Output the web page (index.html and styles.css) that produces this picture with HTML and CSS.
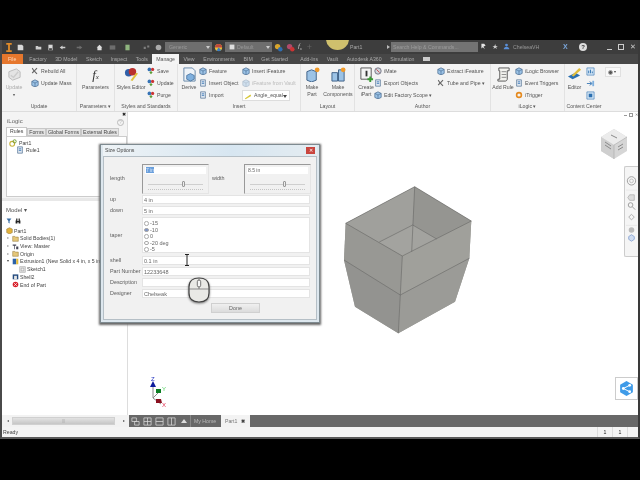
FILE: index.html
```html
<!DOCTYPE html>
<html lang="en">
<head>
<meta charset="utf-8">
<title>Inventor iLogic Size Options</title>
<link rel="stylesheet" href="styles.css">
</head>
<body>
<svg class="defs" width="0" height="0">
  <symbol id="box" viewBox="0 0 10 10"><path d="M1 3l4-2 4 2v5l-4 2-4-2z" fill="#9cc3e6" stroke="#3c5f86" stroke-width=".8"/><path d="M1 3l4 2 4-2M5 5v5" fill="none" stroke="#3c5f86" stroke-width=".7"/></symbol>
  <symbol id="style" viewBox="0 0 10 10"><circle cx="3" cy="3" r="2.3" fill="#3673b5"/><circle cx="7" cy="3" r="2" fill="#c33"/><path d="M3 7l2-2 2 2-2 2z" fill="#5a9c35"/></symbol>
  <symbol id="gear" viewBox="0 0 10 10"><path d="M2 1l2 3 3-3 1 1-3 3 3 3-1 1-3-3-2 2-1-1 2-2-2-3z" fill="#666"/></symbol>
  <symbol id="doc" viewBox="0 0 10 10"><path d="M2 1h6v8H2z" fill="#dde6f0" stroke="#47688c" stroke-width=".8"/><path d="M3.500 3.500h3M3.500 5.500h3" stroke="#3673b5"/></symbol>
  <symbol id="folder" viewBox="0 0 10 10"><path d="M1 2h3l1 1h4v6H1z" fill="#e5c77a" stroke="#8b6f2e" stroke-width=".7"/></symbol>
</svg>

<div class="app">
  <header class="title">
    <span class="blob"></span>
    <svg class="t-logo" viewBox="0 0 8 12"><path d="M1 1h6v2H5v6h2v2H1V9h2V3H1z" fill="#e08b2a"/></svg>
    <svg class="t-ic t1" viewBox="0 0 10 10"><path d="M1 1h6l2 2v6H1z" fill="#d8d8d8"/></svg>
    <svg class="t-ic t2" viewBox="0 0 10 10"><path d="M1 3h3l1 1h4v4H1z" fill="#cfcfcf"/></svg>
    <svg class="t-ic t3" viewBox="0 0 10 10"><path d="M2 1h6v8H2z" fill="#d8d8d8"/><path d="M3 6h4v3H3z" fill="#444"/></svg>
    <svg class="t-ic t3" viewBox="0 0 10 10"><path d="M1 5l4-3v2h4v2H5v2z" fill="#cfcfcf"/></svg>
    <svg class="t-ic t4 t-dim" viewBox="0 0 10 10"><path d="M9 5L5 2v2H1v2h4v2z" fill="#8d8d8d"/></svg>
    <svg class="t-ic t5" viewBox="0 0 10 10"><path d="M5 1l4 4H8v4H2V5H1z" fill="#ddd"/></svg>
    <svg class="t-ic t6 t-dim" viewBox="0 0 10 10"><path d="M1 2h8v6H1z" fill="#8e8e8e"/></svg>
    <svg class="t-ic t7" viewBox="0 0 10 10"><path d="M2 1h6v8H2z" fill="#8fb57f"/></svg>
    <svg class="t-ic t8 t-dim" viewBox="0 0 10 10"><path d="M1 4h3v3H1zM6 2h3v3H6z" fill="#aaa"/></svg>
    <svg class="t-ic t3" viewBox="0 0 10 10"><circle cx="5" cy="5" r="4" fill="#aaa"/></svg>
    <span class="combo">Generic<i class="caret"></i></span>
    <svg class="t-ball" viewBox="0 0 10 10"><circle cx="5" cy="5" r="4" fill="#e8c23d"/><path d="M1 5a4 4 0 0 1 8 0z" fill="#c0483c"/><path d="M3 8.400a4 4 0 0 0 5-.6L5 5z" fill="#3c7cc0"/></svg>
    <span class="combo combo-2"><svg class="c-ic" viewBox="0 0 10 10"><path d="M1 1h8v8H1z" fill="#ddd"/></svg>Default<i class="caret"></i></span>
    <svg class="t-ball" viewBox="0 0 10 10"><circle cx="4" cy="4" r="3" fill="#d8a52c"/><circle cx="7" cy="7" r="2.500" fill="#2f6db0"/></svg>
    <svg class="t-ball t-ball2" viewBox="0 0 10 10"><circle cx="4" cy="4" r="3" fill="#b04a6a"/><circle cx="7" cy="7" r="2.500" fill="#c33"/></svg>
    <span class="t-fx">f<sub>x</sub></span>
    <span class="t-plus">+</span>
    <span class="t-doc">Part1</span>
    <span class="t-arrow"></span>
    <span class="search">Search Help &amp; Commands...</span>
    <svg class="t-ic t-s1" viewBox="0 0 10 10"><path d="M2 1h4l2 3-3 1 2 4-3-3-2 2z" fill="#e6e6e6"/></svg>
    <span class="t-star">★</span>
    <svg class="t-ic t-user" viewBox="0 0 10 10"><circle cx="5" cy="3" r="2" fill="#5a8fd8"/><path d="M1 9c0-5 8-5 8 0z" fill="#5a8fd8"/></svg>
    <span class="t-name">ChelseaVH</span>
    <span class="t-x">X</span>
    <span class="t-help">?</span>
    <span class="win"><i class="w-min"></i><i class="w-max"></i><span class="w-x">✕</span></span>
  </header>

  <nav class="tabs">
    <span class="tab file">File</span><span class="tab">Factory</span><span class="tab">3D Model</span><span class="tab">Sketch</span><span class="tab">Inspect</span><span class="tab">Tools</span><span class="tab on">Manage</span><span class="tab">View</span><span class="tab">Environments</span><span class="tab">BIM</span><span class="tab tab-gs">Get Started</span><span class="tab">Add-Ins</span><span class="tab">Vault</span><span class="tab">Autodesk A360</span><span class="tab">Simulation</span><span class="tab"><i class="cam"></i></span>
  </nav>

  <section class="ribbon">
    <div class="grp g-update">
      <div class="g-in">
        <div class="big dim"><svg class="b-ic" viewBox="0 0 16 16"><path d="M2 5l8-3 4 3v6l-8 3-4-3z" fill="#e4e4e4" stroke="#bbb"/><path d="M4 9l3 2 5-6" fill="none" stroke="#ccc" stroke-width="1.500"/></svg><span>Update</span><b>▾</b></div>
        <div class="col c-up">
          <span class="it"><svg class="ic"><use href="#gear"/></svg>Rebuild All</span>
          <span class="it"><svg class="ic"><use href="#box"/></svg>Update Mass</span>
        </div>
      </div>
      <p class="gl">Update</p>
    </div>
    <div class="grp g-param">
      <div class="g-in center"><div class="big"><span class="fx">f<sub>x</sub></span><span>Parameters</span></div></div>
      <p class="gl">Parameters ▾</p>
    </div>
    <div class="grp g-style">
      <div class="g-in">
        <div class="big w-style"><svg class="b-ic" viewBox="0 0 16 16"><circle cx="5" cy="6" r="4" fill="#2f5fa8"/><circle cx="9" cy="5" r="4" fill="#b9312e"/><path d="M7 14l6-8 2 1-6 8z" fill="#e0c23c"/></svg><span>Styles Editor</span></div>
        <div class="col">
          <span class="it"><svg class="ic"><use href="#style"/></svg>Save</span>
          <span class="it"><svg class="ic"><use href="#style"/></svg>Update</span>
          <span class="it"><svg class="ic"><use href="#style"/></svg>Purge</span>
        </div>
      </div>
      <p class="gl">Styles and Standards</p>
    </div>
    <div class="grp g-insert">
      <div class="g-in">
        <div class="big w-derive"><svg class="b-ic" viewBox="0 0 16 16"><path d="M2 1h9l3 3v11H2z" fill="#eef3f8" stroke="#6486a8"/><path d="M5 9l4-2 4 2v4l-4 2-4-2z" fill="#7fb0de" stroke="#2f5f90" stroke-width=".7"/></svg><span>Derive</span></div>
        <div class="col c-ins">
          <span class="it"><svg class="ic"><use href="#box"/></svg>Feature</span>
          <span class="it"><svg class="ic"><use href="#doc"/></svg>Insert Object</span>
          <span class="it"><svg class="ic"><use href="#doc"/></svg>Import</span>
        </div>
        <div class="col">
          <span class="it"><svg class="ic"><use href="#box"/></svg>Insert iFeature</span>
          <span class="it off"><svg class="ic"><use href="#box"/></svg>iFeature from Vault</span>
          <span class="select"><svg class="ic" viewBox="0 0 10 10"><path d="M1 8l7-5 1 2-7 4z" fill="#d8c83a"/></svg>Angle_equal<i class="caret dark"></i></span>
        </div>
      </div>
      <p class="gl">Insert</p>
    </div>
    <div class="grp g-layout">
      <div class="g-in">
        <div class="big w-part"><svg class="b-ic" viewBox="0 0 16 16"><path d="M2 5l5-2 5 2v9l-5 2-5-2z" fill="#9cc3e6" stroke="#3c5f86"/><circle cx="13" cy="3" r="2.500" fill="#f09a2a"/></svg><span>Make<br>Part</span></div>
        <div class="big w-comp"><svg class="b-ic" viewBox="0 0 16 16"><path d="M1 6h6v9H1zM8 3h6v12H8z" fill="#9cc3e6" stroke="#3c5f86"/><circle cx="13" cy="3" r="2.500" fill="#f09a2a"/></svg><span>Make<br>Components</span></div>
      </div>
      <p class="gl">Layout</p>
    </div>
    <div class="grp g-author">
      <div class="g-in">
        <div class="big w-ipart"><svg class="b-ic" viewBox="0 0 16 16"><path d="M2 1h11v12H2z" fill="#f4f4f4" stroke="#555"/><path d="M7 4h2v6H7z" fill="#333"/><path d="M11 10h2v2h2v2h-2v2h-2v-2H9v-2h2z" fill="#3a9a33"/></svg><span>Create<br>iPart</span></div>
        <div class="col c-mate">
          <span class="it"><svg class="ic" viewBox="0 0 10 10"><circle cx="5" cy="5" r="4" fill="#cfd4da" stroke="#667"/><path d="M3 3l4 4" stroke="#c33"/></svg>iMate</span>
          <span class="it"><svg class="ic"><use href="#doc"/></svg>Export Objects</span>
          <span class="it"><svg class="ic"><use href="#box"/></svg>Edit Factory Scope ▾</span>
        </div>
        <div class="col">
          <span class="it"><svg class="ic"><use href="#box"/></svg>Extract iFeature</span>
          <span class="it"><svg class="ic"><use href="#gear"/></svg>Tube and Pipe ▾</span>
        </div>
      </div>
      <p class="gl">Author</p>
    </div>
    <div class="grp g-ilogic">
      <div class="g-in">
        <div class="big w-rule"><svg class="b-ic" viewBox="0 0 16 16"><path d="M3 1h11v3h-2v9c0 1-1 2-2 2H2v-2h2V4H3z" fill="#f2f2ee" stroke="#555"/><path d="M6 5h5M6 8h5M6 11h5" stroke="#888"/></svg><span>Add Rule</span></div>
        <div class="col">
          <span class="it"><svg class="ic"><use href="#box"/></svg>iLogic Browser</span>
          <span class="it"><svg class="ic"><use href="#doc"/></svg>Event Triggers</span>
          <span class="it"><svg class="ic" viewBox="0 0 10 10"><circle cx="5" cy="5" r="3" fill="none" stroke="#e58a1f" stroke-width="2"/></svg>iTrigger</span>
        </div>
      </div>
      <p class="gl">iLogic ▾</p>
    </div>
    <div class="grp g-content">
      <div class="g-in">
        <div class="big w-edit"><svg class="b-ic" viewBox="0 0 16 16"><path d="M1 10l8-4 5 3-8 4z" fill="#2b6fb0"/><path d="M5 9l8-8 2 2-8 7z" fill="#e0bc3a"/></svg><span>Editor</span></div>
        <div class="col-ic">
          <svg class="ci" viewBox="0 0 10 10"><path d="M1 1h8v8H1z" fill="#d5e6f5" stroke="#3a78b5" stroke-width=".7"/><path d="M3 7V4M5 7V3M7 7V5" stroke="#2b6fb0"/></svg>
          <svg class="ci" viewBox="0 0 10 10"><path d="M1 5h5M4 3l3 2-3 2" fill="none" stroke="#3a78b5"/><path d="M7 2h2v6H7z" fill="#7fb0de"/></svg>
          <svg class="ci" viewBox="0 0 10 10"><path d="M1 1h8v8H1z" fill="#d5e6f5" stroke="#3a78b5" stroke-width=".7"/><path d="M3 3h4v4H3z" fill="#2b6fb0"/></svg>
        </div>
      </div>
      <p class="gl">Content Center</p>
    </div>
    <div class="more"><i class="more-dot"></i><b>▾</b></div>
  </section>

  <main class="work">
    <aside class="side">
      <div class="ilogic">
        <span class="close">✖</span>
        <div class="il-head"><span>iLogic</span><span class="q">?</span></div>
        <div class="il-tabs"><span class="il-tab on">Rules</span><span class="il-tab">Forms</span><span class="il-tab">Global Forms</span><span class="il-tab">External Rules</span></div>
        <div class="il-pane">
          <div class="node"><svg class="ic" viewBox="0 0 10 10"><circle cx="4" cy="6" r="3" fill="none" stroke="#c7b23a" stroke-width="1.400"/><circle cx="7" cy="3" r="2" fill="none" stroke="#6f9e3a" stroke-width="1.200"/></svg>Part1</div>
          <div class="node n2"><svg class="ic"><use href="#doc"/></svg>Rule1</div>
        </div>
      </div>
      <div class="split"></div>
      <div class="model">
        <div class="m-head">Model ▾</div>
        <div class="m-tools">
          <svg class="mt" viewBox="0 0 10 10"><path d="M1 1h8L6 5v4L4 8V5z" fill="#3a6ea5"/></svg>
          <svg class="mt" viewBox="0 0 10 10"><path d="M1 4h3v5H1zM6 4h3v5H6zM2 1h2v3H2zM6 1h2v3H6zM4 5h2v2H4z" fill="#222"/></svg>
        </div>
        <div class="tree">
          <div class="row"><svg class="ic" viewBox="0 0 10 10"><path d="M1 3l4-2 4 2v5l-4 2-4-2z" fill="#e3b23c" stroke="#8b6f2e" stroke-width=".7"/></svg>Part1</div>
          <div class="row lv"><i class="tw">▹</i><svg class="ic"><use href="#folder"/></svg>Solid Bodies(1)</div>
          <div class="row lv"><i class="tw">▹</i><svg class="ic" viewBox="0 0 10 10"><path d="M1 2h5v2H4v5H3V4H1zM6 5h3v4H6z" fill="#445"/></svg>View: Master</div>
          <div class="row lv"><i class="tw">▹</i><svg class="ic"><use href="#folder"/></svg>Origin</div>
          <div class="row lv"><i class="tw">▾</i><svg class="ic" viewBox="0 0 10 10"><path d="M1 1h5v8H1z" fill="#2c62a8"/><path d="M6 1h3v8H6z" fill="#e2b93a"/></svg>Extrusion1 (New Solid x 4 in, x 5 in)</div>
          <div class="row lv2"><svg class="ic" viewBox="0 0 10 10"><path d="M1 1h8v8H1z" fill="#eee" stroke="#888" stroke-width=".7"/><path d="M3 3h4v4H3z" fill="none" stroke="#888" stroke-width=".7"/></svg>Sketch1</div>
          <div class="row lv"><i class="tw"></i><svg class="ic" viewBox="0 0 10 10"><path d="M1 2h8v7H1z" fill="#234a7e"/><path d="M3 4h4v5H3z" fill="#e6e6e6"/></svg>Shell2</div>
          <div class="row lv"><i class="tw"></i><svg class="ic" viewBox="0 0 10 10"><circle cx="5" cy="5" r="4" fill="#d8202a"/><path d="M3 3l4 4M7 3l-4 4" stroke="#fff"/></svg>End of Part</div>
        </div>
      </div>
    </aside>

    <div class="canvas">
      <div class="mdi"><i class="m-min"></i><i class="m-max"></i><span>✕</span></div>
      <svg class="cube" viewBox="0 0 28 32">
        <path d="M14 1l13 8v14l-13 8L1 23V9z" fill="#d6d6d6"/>
        <path d="M14 1l13 8-13 8L1 9z" fill="#ececec"/>
        <path d="M1 9l13 8v14L1 23z" fill="#cfcfcf"/>
        <path d="M14 17v14M14 17L27 9" stroke="#aaa" stroke-width=".6" fill="none"/>
        <path d="M5 14l6 4M5 17l6 4M18 22l5-3M18 19l5-3M11 7l6 3" stroke="#8a8a8a" stroke-width="1"/>
      </svg>
      <div class="nav">
        <svg viewBox="0 0 14 90">
          <circle cx="7" cy="12" r="4.500" fill="none" stroke="#999"/><circle cx="7" cy="12" r="2" fill="none" stroke="#bbb"/>
          <path d="M3 30l2-3h5v6H5z" fill="#ddd" stroke="#999" stroke-width=".6"/>
          <circle cx="6" cy="38" r="2.500" fill="none" stroke="#999"/><path d="M8 40l3 3" stroke="#999"/>
          <path d="M7 48l3 3-3 3-3-3z" fill="none" stroke="#aaa"/>
          <circle cx="7" cy="65" r="3" fill="#bbb"/>
          <path d="M4 72l3-2 3 2v3l-3 2-3-2z" fill="#cfdcf0" stroke="#6d8ec9" stroke-width=".7"/>
          <path d="M1 22h12M1 60h12" stroke="#ddd" stroke-width=".5"/>
        </svg>
      </div>
      <svg class="part" viewBox="343 186 130 150">
        <path d="M345.700 223.300L414.700 186.700 471.300 221 469.300 258.300 455 301.700 398.300 333.300 355 306.700 344 260z" fill="#9a9a96"/>
        <path d="M345.700 223.300L414.700 186.700 411.700 251.700 402.300 256z" fill="#a0a09c"/>
        <path d="M414.700 186.700L471.300 221 436.700 239 412.700 225z" fill="#959591"/>
        <path d="M379.300 242l33.400-17 24 14-25 12.700-8.400 4.300z" fill="#a3a39f"/>
        <path d="M345.700 223.300L402.300 256 400.300 295 344 260z" fill="#989894"/>
        <path d="M402.300 256L471.300 221 469.300 258.300 400.300 295z" fill="#a0a09b"/>
        <path d="M344 260L400.300 295 398.300 333.300 355 306.700z" fill="#939390"/>
        <path d="M400.300 295L469.300 258.300 455 301.700 398.300 333.300z" fill="#9b9b97"/>
        <g fill="none" stroke="#686866" stroke-width=".6">
          <path d="M345.700 223.300L414.700 186.700 471.300 221 402.300 256z"/>
          <path d="M414.700 186.700L411.700 251.700M379.300 242l33.400-17 24 14"/>
          <path d="M402.300 256L400.300 295 398.300 333.300M344 260L400.300 295 469.300 258.300"/>
        </g>
      </svg>
      <svg class="triad" viewBox="0 0 20 32">
        <path d="M5 7v15l8 6M5 22l6-6" stroke="#8a8a8a" fill="none"/>
        <path d="M5 5l3 6H2z" fill="#0d1a9c"/><path d="M8 13h5v4H8z" fill="#0c7d22"/><path d="M8 23l5 0 1 4H8z" fill="#8a1020"/>
        <text x="3" y="4.500" class="tz">Z</text><text x="14" y="15" class="ty">Y</text><text x="14" y="31" class="tx">X</text>
      </svg>
      <div class="share"><svg viewBox="0 0 16 16"><path d="M8 1l6 3.500v7L8 15l-6-3.500v-7z" fill="#3f9be8"/><path d="M5 8l6-3M5 8l6 3" stroke="#fff" stroke-width=".9"/><circle cx="5" cy="8" r="1.300" fill="#fff"/><circle cx="11" cy="5" r="1.300" fill="#fff"/><circle cx="11" cy="11" r="1.300" fill="#fff"/></svg></div>
    </div>

    <section class="dialog">
      <div class="d-title"><span>Size Options</span><i class="d-x">✕</i></div>
      <div class="d-body">
        <div class="d-top">
          <span class="d-l">length</span>
          <div class="sbox s1"><span class="inp"><mark>7 in</mark></span><div class="track"><i class="thumb"></i></div></div>
          <span class="d-w">width</span>
          <div class="sbox s2"><span class="inp">8.5 in</span><div class="track"><i class="thumb"></i></div></div>
        </div>
        <div class="d-row r-up"><span class="d-l">up</span><span class="inp">4 in</span></div>
        <div class="d-row"><span class="d-l">down</span><span class="inp">5 in</span></div>
        <div class="d-row r-taper"><span class="d-l">taper</span>
          <div class="radios">
            <label><i class="rd"></i>-15</label><label><i class="rd sel"></i>-10</label><label><i class="rd"></i>0</label><label><i class="rd"></i>-20 deg</label><label><i class="rd"></i>-5</label>
          </div>
        </div>
        <div class="d-row"><span class="d-l">shell</span><span class="inp">0.1 in</span></div>
        <div class="d-row"><span class="d-l">Part Number</span><span class="inp">12233648</span></div>
        <div class="d-row"><span class="d-l">Description</span><span class="inp"></span></div>
        <div class="d-row"><span class="d-l">Designer</span><span class="inp">Chelseak</span></div>
        <div class="d-foot"><span class="done">Done</span></div>
      </div>
      <svg class="ibeam" viewBox="0 0 6 12"><path d="M1 .5h4M3 .5v11M1 11.500h4" stroke="#222" fill="none"/></svg>
      <svg class="mouse" viewBox="0 0 22 26"><path d="M11 1c6 0 10 3 10 9v6c0 6-4 9-10 9S1 22 1 16v-6C1 4 5 1 11 1z" fill="#e9e9e6" stroke="#444" stroke-width="1.200"/><path d="M1 12h20M11 1v11" stroke="#666" stroke-width=".7"/><rect x="9.300" y="3" width="3.400" height="7" rx="1.700" fill="#f6f6f6" stroke="#555" stroke-width=".8"/></svg>
    </section>
  </main>

  <div class="docbar">
    <div class="hscroll"><i class="ha">◂</i><span class="thumbbar">|||</span><i class="ha">▸</i></div>
    <div class="doctabs">
      <svg class="dt" viewBox="0 0 10 10"><path d="M1 1h5v4H1zM4 5h5v4H4z" fill="none" stroke="#ddd" stroke-width=".8"/></svg>
      <svg class="dt" viewBox="0 0 10 10"><path d="M1 1h8v8H1zM5 1v8M1 5h8" fill="none" stroke="#ddd" stroke-width=".8"/></svg>
      <svg class="dt" viewBox="0 0 10 10"><path d="M1 1h8v8H1zM1 5h8" fill="none" stroke="#ddd" stroke-width=".8"/></svg>
      <svg class="dt" viewBox="0 0 10 10"><path d="M1 1h8v8H1zM5 1v8" fill="none" stroke="#ddd" stroke-width=".8"/></svg>
      <span class="up"></span>
      <span class="home">My Home</span>
      <span class="active">Part1 <b>✖</b></span>
    </div>
  </div>
  <footer class="status"><span class="ready">Ready</span><span class="cell c1">1</span><span class="cell">1</span><span class="grip"></span></footer>
</div>
</body>
</html>
```
FILE: styles.css
```css
* { box-sizing: border-box; }
html, body { margin: 0; height: 100%; background: #000; overflow: hidden; }
body { font: 5.2px/1.2 "Liberation Sans", Arial, sans-serif; color: #444; }
.defs { position: absolute; }
i { font-style: normal; }
p { margin: 0; }

.app { margin-top: 40px; width: 640px; height: 399px; background: #fff; border-left: 2px solid #4a4a4a; border-right: 2px solid #3a3a3a; border-bottom: 2px solid #5a5a5a; display: flex; flex-direction: column; position: relative; overflow: hidden; filter: blur(.3px); }

/* title bar */
.title { height: 14px; flex: none; background: #3d3d3d; display: flex; align-items: center; color: #bbb; position: relative; overflow: hidden; }
.blob { position: absolute; left: 324px; top: -12px; width: 23px; height: 22px; border-radius: 50%; background: #cfc06d; }
.t-logo { width: 8px; height: 11px; margin-left: 3px; flex: none; }
.t-ic { width: 7px; height: 7px; flex: none; }
.t1 { margin-left: 3.500px; }
.t2 { margin-left: 11px; }
.t3 { margin-left: 5px; }
.t4 { margin-left: 10px; }
.t5 { margin-left: 13px; }
.t6 { margin-left: 6px; }
.t7 { margin-left: 8px; }
.t8 { margin-left: 12px; }
.t-dim { opacity: .6; }
.combo { width: 47px; height: 10px; margin-left: 3.500px; background: #6e6e6e; color: #999; padding-left: 4px; display: flex; align-items: center; position: relative; flex: none; }
.combo-2 { margin-left: 2px; }
.c-ic { width: 6px; height: 6px; margin-right: 2px; }
.caret { position: absolute; right: 2px; top: 4px; border: 2px solid transparent; border-top: 3px solid #ccc; border-bottom: 0; }
.caret.dark { border-top-color: #444; }
.t-ball { width: 9px; height: 9px; margin-left: 2px; flex: none; }
.t-ball2 { margin-left: 3px; }
.t-fx { margin-left: 3px; font: italic 7px "Liberation Serif", serif; color: #ccc; }
.t-fx sub { font-size: 4px; }
.t-plus { margin-left: 5px; color: #666; font-size: 9px; }
.t-doc { position: absolute; left: 348px; top: 4px; color: #a8a8a8; }
.t-arrow { position: absolute; left: 385px; top: 5px; border: 2px solid transparent; border-left: 3px solid #bbb; border-right: 0; }
.search { position: absolute; left: 389px; top: 2px; width: 87px; height: 10px; background: #737373; color: #9d9d9d; padding: 2px 2px; }
.t-s1 { position: absolute; left: 478px; top: 3px; margin: 0; }
.t-star { position: absolute; left: 490px; top: 3px; color: #ccc; font-size: 7px; }
.t-user { position: absolute; left: 501px; top: 3px; margin: 0; }
.t-name { position: absolute; left: 511px; top: 4px; color: #999; }
.t-x { position: absolute; left: 561px; top: 3px; color: #7aa6da; font-weight: bold; font-size: 7px; }
.t-help { position: absolute; left: 577px; top: 3px; width: 8px; height: 8px; border-radius: 50%; background: #ddd; color: #333; font: bold 6px/8px "Liberation Sans", sans-serif; text-align: center; }
.win { position: absolute; left: 605px; top: 2px; display: flex; align-items: center; gap: 6px; height: 10px; }
.w-min { width: 5px; height: 1px; background: #ccc; margin-top: 4px; }
.w-max { width: 6px; height: 6px; border: 1px solid #ccc; }
.w-x { color: #ccc; font-size: 7px; }

/* tabs */
.tabs { height: 10px; flex: none; background: #474747; display: flex; color: #aaa; }
.tab { padding: 0 4.300px; line-height: 10px; white-space: nowrap; }
.tab.file { background: #e6772d; color: #ffd9bd; width: 21px; margin-right: 2px; padding-left: 6px; }
.tab.on { background: #f4f4f4; color: #555; width: 27px; padding-left: 4px; }
.tab-gs { padding-right: 8px; }
.cam { display: inline-block; width: 7px; height: 4px; background: #ccc; }

/* ribbon */
.ribbon { height: 48px; flex: none; background: #f3f3f3; display: flex; border-bottom: 1px solid #ddd; }
.grp { flex: none; display: flex; flex-direction: column; border-right: 1px solid #e2e2e2; }
.g-in { height: 40px; display: flex; padding-top: 3px; }
.center { justify-content: center; }
.gl { height: 8px; text-align: center; color: #555; line-height: 7px; }
.g-update { width: 75px; } .g-param { width: 38px; } .g-style { width: 63px; } .g-insert { width: 123px; }
.g-layout { width: 54px; } .g-author { width: 136px; } .g-ilogic { width: 74px; } .g-content { width: 38px; border-right: 0; }
.big { display: flex; flex-direction: column; align-items: center; text-align: center; color: #555; flex: none; line-height: 7px; }
.big.dim { color: #aaa; width: 24px; }
.big b { font-size: 4px; color: #666; }
.b-ic { width: 15px; height: 15px; margin-bottom: 1.500px; flex: none; }
.fx { height: 17px; font: italic 13px/15px "Liberation Serif", serif; color: #333; }
.fx sub { font-size: 7px; line-height: 0; vertical-align: baseline; }
.col { display: flex; flex-direction: column; gap: 4px; }
.c-up { margin-left: 5px; }
.it { display: flex; align-items: center; height: 8px; white-space: nowrap; color: #555; }
.it.off { color: #bbb; }
.it.off .ic { opacity: .4; }
.ic { width: 8px; height: 8px; margin-right: 2px; flex: none; }
.w-style { width: 32px; white-space: nowrap; }
.w-derive { width: 20px; margin-left: 1px; }
.c-ins { width: 43px; }
.select { width: 48px; height: 11px; background: #fff; border: 1px solid #ddd; display: flex; align-items: center; position: relative; color: #555; padding-left: 1px; margin-top: -1px; }
.select .caret { top: 4px; }
.w-part { width: 22px; }
.w-comp { width: 32px; margin-left: -1px; }
.w-ipart { width: 20px; margin-left: 1px; }
.c-mate { width: 63px; margin-left: -2px; }
.w-rule { width: 24px; }
.w-edit { width: 19px; }
.col-ic { display: flex; flex-direction: column; gap: 3px; margin-left: 2px; }
.ci { width: 9px; height: 9px; }
.more { margin: 3px 0 0 2px; width: 16px; height: 10px; display: flex; align-items: center; gap: 1px; background: #f8f8f8; border: 1px solid #e0e0e0; padding-left: 2px; font-size: 4px; }
.more-dot { width: 5px; height: 5px; border-radius: 50%; background: #555; border: 1px solid #aaa; }
.more b { font-weight: normal; }

/* workspace */
.work { flex: 1; min-height: 0; display: flex; position: relative; }
.side { width: 126px; flex: none; display: flex; flex-direction: column; background: #f5f5f5; border-right: 1px solid #ddd; }
.ilogic { height: 86px; flex: none; padding: 5px 0 0 4px; position: relative; background: #f4f4f4; }
.close { position: absolute; right: 1px; top: -1px; font-size: 5px; color: #222; }
.il-head { display: flex; justify-content: space-between; align-items: center; height: 10px; padding: 0 1px; font-size: 6px; color: #666; }
.q { width: 7px; height: 7px; margin-right: 2px; border: 1px solid #bbb; border-radius: 50%; color: #bbb; font-size: 5px; line-height: 5px; text-align: center; }
.il-tabs { display: flex; height: 9px; }
.il-tab { padding: 0 1px; border: 1px solid #c8c8c8; background: #e6e6e6; line-height: 7px; margin-top: 1px; white-space: nowrap; color: #444; }
.il-tab.on { background: #fff; margin-top: 0; border-bottom: 0; padding: 0 3px; }
.il-pane { background: #fff; border: 1px solid #ccc; height: 61px; padding: 2px 0 0 2px; }
.node { display: flex; align-items: center; height: 7.500px; }
.n2 { margin-left: 7px; }
.split { height: 3px; background: #e8e8e8; flex: none; }
.model { flex: 1; min-height: 0; background: #fff; padding: 6px 0 0 4px; overflow: hidden; }
.m-head { height: 9px; font-size: 6px; color: #555; }
.m-tools { display: flex; gap: 3px; height: 10px; align-items: center; }
.mt { width: 6px; height: 6px; }
.tree { margin-top: 1px; }
.row { height: 7.700px; display: flex; align-items: center; white-space: nowrap; color: #444; }
.lv { margin-left: 1px; }
.lv2 { margin-left: 13px; }
.tw { width: 5px; font-size: 4px; color: #444; }
.row .ic { width: 7px; height: 7px; margin-right: 1px; }

.canvas { flex: 1; background: #fff; position: relative; }
.mdi { position: absolute; right: 0; top: 0; display: flex; align-items: center; gap: 2px; height: 6px; color: #777; font-size: 4px; }
.m-min { width: 3px; height: 1px; background: #999; }
.m-max { width: 4px; height: 4px; border: 1px solid #999; }
.cube { position: absolute; right: 10px; top: 16px; width: 28px; height: 32px; }
.nav { position: absolute; right: 0; top: 54px; width: 14px; height: 91px; background: #f5f5f5; border: 1px solid #ccc; border-right: 0; border-radius: 2px 0 0 2px; }
.nav svg { display: block; width: 13px; height: 89px; }
.part { position: absolute; left: 215px; top: 74px; width: 130px; height: 150px; }
.triad { position: absolute; left: 20px; top: 264px; width: 20px; height: 32px; }
.tz { font: 6px "Liberation Sans", sans-serif; fill: #2232c0; }
.ty { font: 6px "Liberation Sans", sans-serif; fill: #52d060; }
.tx { font: 6px "Liberation Sans", sans-serif; fill: #e03050; }
.share { position: absolute; right: 0; top: 265px; width: 23px; height: 23px; border: 1px solid #ccc; padding: 2px; background: #fff; }
.share svg { display: block; width: 17px; height: 17px; }

/* dialog */
.dialog { position: absolute; left: 98px; top: 32px; width: 220px; height: 179px; background: #dde7ee; border: 1px solid #7e8a90; box-shadow: 0 1px 2px 1px #666; padding: 0 2px 2px; display: flex; flex-direction: column; color: #555; }
.d-title { height: 11px; flex: none; display: flex; justify-content: space-between; align-items: center; color: #444; background: linear-gradient(90deg, #eef3f6, #d7e6f1 60%, #e4ecf1); padding-left: 2px; }
.d-x { width: 9px; height: 7px; background: #c9453e; color: #fff; font-size: 5px; line-height: 7px; text-align: center; margin-right: 2px; }
.d-body { flex: 1; background: #f1f1f1; padding: 6px 6px 0 6px; border: 1px solid #b5bfc6; font-size: 5.400px; color: #5d5d5d; }
.d-top { display: flex; height: 31px; align-items: center; margin-bottom: 1px; }
.d-l { width: 32px; flex: none; white-space: nowrap; }
.d-w { width: 35px; padding-left: 3px; flex: none; }
.sbox { height: 30px; border: 1px solid #999; border-right-color: #e5e5e5; border-bottom-color: #e5e5e5; padding: 2px; flex: none; width: 67px; }
.sbox .inp { display: block; height: 7px; line-height: 7px; padding: 0 1px; font-size: 5px; }
.inp { background: #fff; flex: 1; padding: 0 1px; font-size: 5.500px; color: #666; line-height: 8px; border: 0; }
mark { background: #6a9fdc; color: #dbe8f7; }
.track { height: 1px; background: #cfcfcf; margin: 10px 3px 0; position: relative; }
.track::after { content: ""; position: absolute; left: 0; right: 0; top: 5px; border-top: 1px dotted #c4c4c4; }
.thumb { position: absolute; left: 34px; top: -3px; width: 3px; height: 6px; background: #eee; border: 1px solid #999; border-radius: 1px; }
.s2 .thumb { left: 33px; }
.d-row { display: flex; align-items: center; height: 9px; margin-bottom: 2px; }
.d-row .inp { height: 9px; border: 1px solid #e4e4e4; }
.r-taper { height: 36px; margin-bottom: 3px; }
.radios { flex: 1; height: 36px; background: #fff; border: 1px solid #e4e4e4; padding: 2px 1px; display: flex; flex-direction: column; font-size: 5.500px; color: #666; }
.radios label { display: flex; align-items: center; height: 6.700px; }
.rd { width: 4.500px; height: 4.500px; border: 1px solid #aaa; border-radius: 50%; margin-right: 1.500px; flex: none; }
.rd.sel { background: #7c93c8; }
.d-foot { padding: 3px 0 0 101px; }
.done { display: block; width: 49px; height: 10px; border: 1px solid #d0d0d0; background: linear-gradient(#f0f0f0, #dcdcdc); text-align: center; line-height: 8px; color: #666; }
.ibeam { position: absolute; left: 83px; top: 109px; width: 6px; height: 12px; }
.mouse { position: absolute; left: 87px; top: 132px; width: 22px; height: 26px; filter: drop-shadow(0 1px 1px #777); }

/* doc bar */
.docbar { height: 12px; flex: none; display: flex; }
.hscroll { width: 127px; flex: none; background: #f2f2f2; display: flex; align-items: center; padding: 0 2px; color: #555; justify-content: space-between; font-size: 4px; }
.ha { width: 7px; text-align: center; }
.thumbbar { flex: 1; height: 8px; background: linear-gradient(#e2e2e2, #c6c6c6); border: 1px solid #d0d0d0; text-align: center; line-height: 6px; margin: 0 5px 0 1px; color: #aaa; }
.doctabs { flex: 1; background: #686868; display: flex; align-items: center; padding-left: 2px; }
.dt { width: 9px; height: 9px; margin-right: 3px; flex: none; }
.up { border: 3px solid transparent; border-bottom: 4px solid #ddd; border-top: 0; margin: 0 3px 0 2px; }
.home { height: 12px; line-height: 12px; padding-left: 3px; color: #bbb; border-left: 1px solid #888; width: 31px; white-space: nowrap; flex: none; }
.active { height: 12px; line-height: 12px; background: #f3f3f3; color: #777; padding-left: 4px; width: 29px; white-space: nowrap; flex: none; }
.active b { font-size: 5px; color: #444; margin-left: 2px; }

.status { height: 10px; flex: none; background: #f4f4f4; display: flex; align-items: center; padding-left: 1px; color: #444; }
.ready { flex: 1; }
.cell { width: 15px; height: 10px; line-height: 10px; text-align: center; border-left: 1px solid #ddd; color: #222; }
.c1 { width: 15px; }
.grip { width: 11px; height: 10px; border-left: 1px solid #ddd; }
```
